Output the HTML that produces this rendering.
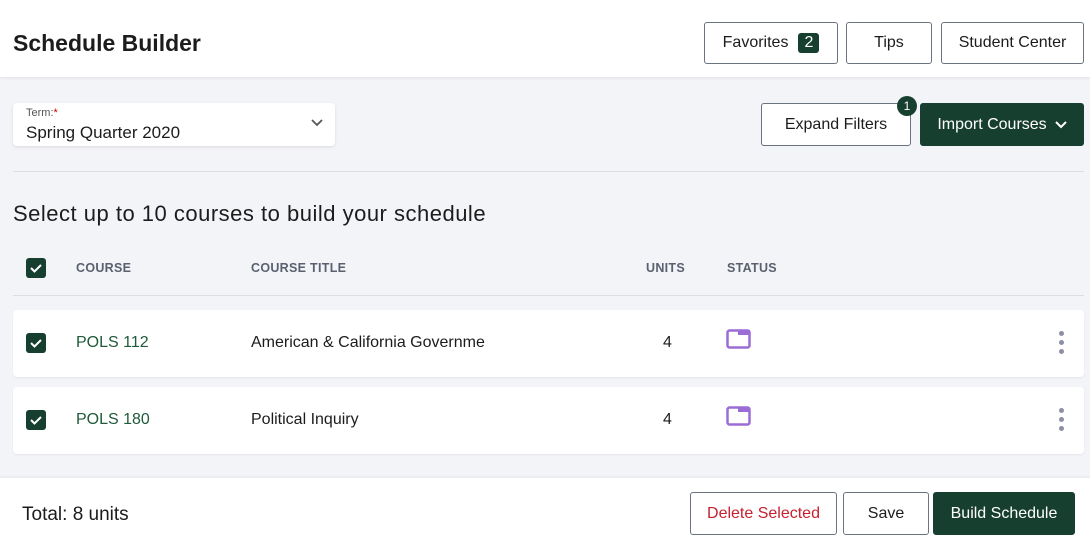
<!DOCTYPE html>
<html><head><style>
*{box-sizing:border-box;margin:0;padding:0}
body{width:1090px;height:544px;background:#f3f4f8;font-family:"Liberation Sans",sans-serif;color:#1c1c1c;position:relative;overflow:hidden}
.abs{position:absolute}
.btn{position:absolute;border:1px solid #6b7280;border-radius:3px;background:#fff;font-size:16px;display:flex;align-items:center;justify-content:center}
.dark{background:#173f30;color:#fff;border-color:#173f30}
.cb{position:absolute;width:20px;height:20px;background:#173f30;border-radius:3px}
.hdr{position:absolute;top:261px;font-size:12.5px;font-weight:bold;color:#5a6070;letter-spacing:.3px}
.row{position:absolute;left:13px;width:1071px;height:67px;background:#fff;border-radius:4px;box-shadow:0 1px 2px rgba(0,0,0,.06)}
.row span{position:absolute;top:24px;font-size:16px}
.dots{position:absolute;left:1046px;width:5px}
.dots i{display:block;width:5px;height:5px;border-radius:50%;background:#8c90a4;margin-bottom:4px}
</style></head><body>
<div class="abs" style="left:0;top:0;width:1090px;height:77px;background:#fff;box-shadow:0 1px 3px rgba(0,0,0,.08)"></div>
<div class="abs" style="left:13px;top:30px;font-size:23px;font-weight:bold">Schedule Builder</div>
<div class="btn" style="left:704px;top:22px;width:134px;height:42px">Favorites<span style="margin-left:10px;background:#173f30;color:#fff;padding:1px 6px;border-radius:3px;font-size:16px">2</span></div>
<div class="btn" style="left:846px;top:22px;width:86px;height:42px">Tips</div>
<div class="btn" style="left:941px;top:22px;width:143px;height:42px">Student Center</div>

<div class="abs" style="left:13px;top:103px;width:322px;height:43px;background:#fff;border-radius:4px;box-shadow:0 1px 3px rgba(0,0,0,.1)">
<div class="abs" style="left:13px;top:4px;font-size:11px;color:#555">Term:<span style="color:#c00">*</span></div>
<div class="abs" style="left:13px;top:20px;font-size:17px">Spring Quarter 2020</div>
<svg class="abs" style="left:298px;top:16px" width="12" height="8"><path d="M1 1l5 5 5-5" stroke="#555" stroke-width="1.8" fill="none"/></svg>
</div>
<div class="btn" style="left:761px;top:103px;width:150px;height:43px">Expand Filters</div>
<div class="abs" style="left:897px;top:96px;width:20px;height:20px;border-radius:50%;background:#173f30;color:#fff;font-size:12px;text-align:center;line-height:20px">1</div>
<div class="btn dark" style="left:920px;top:103px;width:164px;height:43px">Import Courses<svg style="margin-left:8px" width="12" height="8"><path d="M1 1l5 5 5-5" stroke="#fff" stroke-width="2" fill="none"/></svg></div>
<div class="abs" style="left:13px;top:171px;width:1071px;height:1px;background:#dcdee4"></div>
<div class="abs" style="left:13px;top:201px;font-size:22px;letter-spacing:.5px">Select up to 10 courses to build your schedule</div>

<div class="cb" style="left:26px;top:258px"><svg width="20" height="20"><path d="M5 10l3.5 3.5L15 7" stroke="#fff" stroke-width="2" fill="none"/></svg></div>
<div class="hdr" style="left:76px">COURSE</div>
<div class="hdr" style="left:251px">COURSE TITLE</div>
<div class="hdr" style="left:646px">UNITS</div>
<div class="hdr" style="left:727px">STATUS</div>
<div class="abs" style="left:13px;top:295px;width:1071px;height:1px;background:#dcdee4"></div>

<div class="row" style="top:310px">
<div class="cb" style="left:13px;top:23px"><svg width="20" height="20"><path d="M5 10l3.5 3.5L15 7" stroke="#fff" stroke-width="2" fill="none"/></svg></div>
<span style="left:63px;color:#1f5a3a">POLS 112</span><span style="left:238px">American &amp; California Governme</span><span style="left:650px">4</span>
<svg class="abs" style="left:713px;top:19px" width="26" height="21"><rect x="1.5" y="1.5" width="22" height="17" rx="2" fill="none" stroke="#9b6bd6" stroke-width="2.5"/><rect x="12" y="1" width="12" height="5" fill="#9b6bd6"/></svg>
<div class="dots" style="top:21px"><i></i><i></i><i></i></div>
</div>
<div class="row" style="top:387px">
<div class="cb" style="left:13px;top:23px"><svg width="20" height="20"><path d="M5 10l3.5 3.5L15 7" stroke="#fff" stroke-width="2" fill="none"/></svg></div>
<span style="left:63px;color:#1f5a3a">POLS 180</span><span style="left:238px">Political Inquiry</span><span style="left:650px">4</span>
<svg class="abs" style="left:713px;top:19px" width="26" height="21"><rect x="1.5" y="1.5" width="22" height="17" rx="2" fill="none" stroke="#9b6bd6" stroke-width="2.5"/><rect x="12" y="1" width="12" height="5" fill="#9b6bd6"/></svg>
<div class="dots" style="top:21px"><i></i><i></i><i></i></div>
</div>

<div class="abs" style="left:0;top:478px;width:1090px;height:66px;background:#fff;box-shadow:0 -1px 3px rgba(0,0,0,.06)"></div>
<div class="abs" style="left:22px;top:504px;font-size:19px">Total: 8 units</div>
<div class="btn" style="left:690px;top:492px;width:147px;height:43px;color:#c8202f">Delete Selected</div>
<div class="btn" style="left:843px;top:492px;width:86px;height:43px">Save</div>
<div class="btn dark" style="left:933px;top:492px;width:142px;height:43px">Build Schedule</div>
</body></html>
